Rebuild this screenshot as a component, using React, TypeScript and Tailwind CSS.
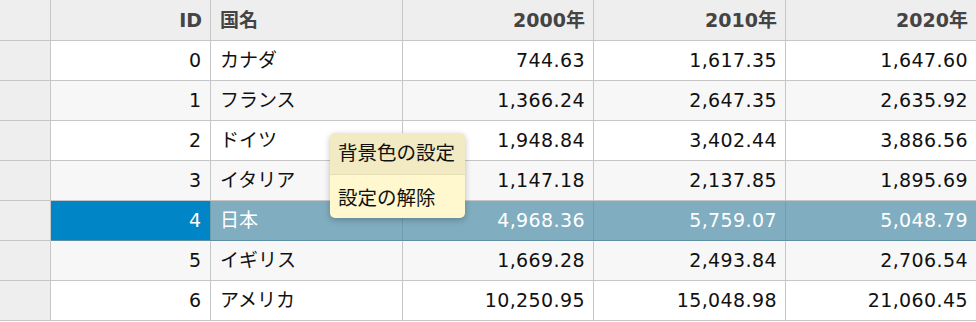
import React from 'react'

const rows = [
  { id: 0, name: 'カナダ', y2000: '744.63', y2010: '1,617.35', y2020: '1,647.60' },
  { id: 1, name: 'フランス', y2000: '1,366.24', y2010: '2,647.35', y2020: '2,635.92' },
  { id: 2, name: 'ドイツ', y2000: '1,948.84', y2010: '3,402.44', y2020: '3,886.56' },
  { id: 3, name: 'イタリア', y2000: '1,147.18', y2010: '2,137.85', y2020: '1,895.69' },
  { id: 4, name: '日本', y2000: '4,968.36', y2010: '5,759.07', y2020: '5,048.79' },
  { id: 5, name: 'イギリス', y2000: '1,669.28', y2010: '2,493.84', y2020: '2,706.54' },
  { id: 6, name: 'アメリカ', y2000: '10,250.95', y2010: '15,048.98', y2020: '21,060.45' },
]

const cols = 'grid grid-cols-[51px_160px_192px_191px_192px_190px]'
const font = { fontFamily: '"DejaVu Sans", Verdana, "Noto Sans CJK JP", sans-serif' }

export default function App() {
  const selected = 4

  return (
    <div className="relative w-[976px] h-[322px] bg-white overflow-hidden text-[19px]" style={font}>
      {/* Header */}
      <div className={`${cols} h-[41px] bg-[#eeeeee] text-[#444444] font-bold`}>
        <div className="border-r border-b border-[#c6c6c6]" />
        <div className="border-r border-b border-[#c6c6c6] flex items-center justify-end pr-[8px]">ID</div>
        <div className="border-r border-b border-[#c6c6c6] flex items-center pl-[9px]">国名</div>
        <div className="border-r border-b border-[#c6c6c6] flex items-center justify-end pr-[8px]">2000年</div>
        <div className="border-r border-b border-[#c6c6c6] flex items-center justify-end pr-[8px]">2010年</div>
        <div className="border-b border-[#c6c6c6] flex items-center justify-end pr-[8px]">2020年</div>
      </div>

      {/* Rows */}
      {rows.map((r, i) => {
        const isSel = r.id === selected
        const bg = isSel ? 'bg-[#80adbf] text-white' : i % 2 === 1 ? 'bg-[#f7f7f7] text-[#111111]' : 'bg-white text-[#111111]'
        const bb = isSel ? 'border-b-[#5e8ea3]' : 'border-b-[#c6c6c6]'
        const br = isSel ? 'border-r-[#6f9db1]' : 'border-r-[#c6c6c6]'
        return (
          <div key={r.id} className={`${cols} h-[40px]`}>
            <div className="bg-[#eeeeee] border-r border-b border-[#c6c6c6]" />
            <div
              className={`${isSel ? 'bg-[#0085c7] text-white' : bg} border-r border-b ${br} ${bb} flex items-center justify-end pr-[9px]`}
            >
              {r.id}
            </div>
            <div className={`${bg} border-r border-b ${br} ${bb} flex items-center pl-[9px]`}>{r.name}</div>
            <div className={`${bg} border-r border-b ${br} ${bb} flex items-center justify-end pr-[8px] tracking-[0.4px]`}>{r.y2000}</div>
            <div className={`${bg} border-r border-b ${br} ${bb} flex items-center justify-end pr-[8px] tracking-[0.4px]`}>{r.y2010}</div>
            <div className={`${bg} border-b ${bb} flex items-center justify-end pr-[8px] tracking-[0.4px]`}>{r.y2020}</div>
          </div>
        )
      })}

      {/* Context menu */}
      <div className="absolute left-[330px] top-[133px] w-[135px] rounded-[5px] bg-[#fff8cf] shadow-[0_2px_6px_rgba(0,0,0,0.25)] overflow-hidden text-[#111111] text-[19.5px]">
        <div className="h-[42px] flex items-center pl-[8px] bg-[#f2eac2] border-b border-[#e6ddb3]">背景色の設定</div>
        <div className="h-[43px] flex items-center pl-[8px] pt-[4px]">設定の解除</div>
      </div>
    </div>
  )
}
